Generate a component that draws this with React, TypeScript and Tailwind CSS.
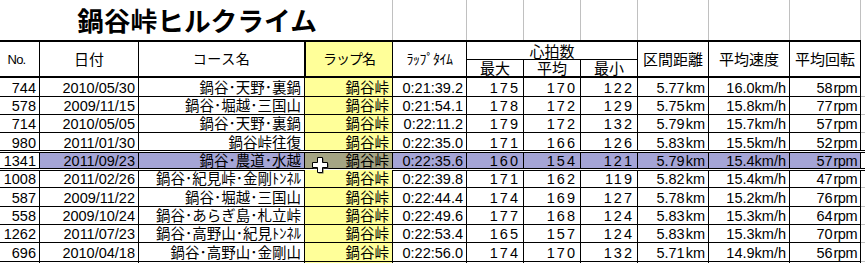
import React from 'react';

const W = ['w-[40px]', 'w-[99px]', 'w-[166px]', 'w-[88px]', 'w-[74px]', 'w-[57px]', 'w-[57px]', 'w-[57px]', 'w-[71px]', 'w-[81px]', 'w-[71px]'];
const H = ['h-[19px]', 'h-[18px]', 'h-[18px]', 'h-[19px]', 'h-[18px]', 'h-[18px]', 'h-[19px]', 'h-[18px]', 'h-[18px]', 'h-[19px]', 'h-[18px]'];

type Row = {
  no: string; date: string; course: string; time: string;
  max: string; avg: string; min: string; dist: string; speed: string; rpm: string; sel?: boolean;
};

const rows: Row[] = [
  { no: '744', date: '2010/05/30', course: '鍋谷･天野･裏鍋', time: '0:21:39.2', max: '175', avg: '170', min: '122', dist: '5.77', speed: '16.0', rpm: '58' },
  { no: '578', date: '2009/11/15', course: '鍋谷･堀越･三国山', time: '0:21:54.1', max: '178', avg: '172', min: '129', dist: '5.75', speed: '15.8', rpm: '77' },
  { no: '714', date: '2010/05/05', course: '鍋谷･天野･裏鍋', time: '0:22:11.2', max: '179', avg: '172', min: '132', dist: '5.79', speed: '15.7', rpm: '57' },
  { no: '980', date: '2011/01/30', course: '鍋谷峠往復', time: '0:22:35.0', max: '171', avg: '166', min: '126', dist: '5.83', speed: '15.5', rpm: '52' },
  { no: '1341', date: '2011/09/23', course: '鍋谷･農道･水越', time: '0:22:35.6', max: '160', avg: '154', min: '121', dist: '5.79', speed: '15.4', rpm: '57', sel: true },
  { no: '1008', date: '2011/02/26', course: '鍋谷･紀見峠･金剛ﾄﾝﾈﾙ', time: '0:22:39.8', max: '171', avg: '162', min: '119', dist: '5.82', speed: '15.4', rpm: '47' },
  { no: '587', date: '2009/11/22', course: '鍋谷･堀越･三国山', time: '0:22:44.4', max: '174', avg: '169', min: '127', dist: '5.78', speed: '15.2', rpm: '76' },
  { no: '558', date: '2009/10/24', course: '鍋谷･あらぎ島･札立峠', time: '0:22:49.6', max: '177', avg: '168', min: '124', dist: '5.83', speed: '15.3', rpm: '64' },
  { no: '1262', date: '2011/07/23', course: '鍋谷･高野山･紀見ﾄﾝﾈﾙ', time: '0:22:53.4', max: '165', avg: '157', min: '124', dist: '5.83', speed: '15.3', rpm: '70' },
  { no: '696', date: '2010/04/18', course: '鍋谷･高野山･金剛山', time: '0:22:56.0', max: '174', avg: '170', min: '132', dist: '5.71', speed: '14.9', rpm: '56' },
  { no: '601', date: '2009/12/06', course: '鍋谷･堀越･三国山', time: '0:22:58.3', max: '176', avg: '168', min: '125', dist: '5.76', speed: '15.0', rpm: '61' },
];

function Cell({ w, className = '', children }: { w: string; className?: string; children?: React.ReactNode }) {
  return (
    <div className={`${w} shrink-0 h-full box-border border-r border-b border-black flex items-center justify-end pr-[3px] pt-[2px] whitespace-nowrap overflow-hidden ${className}`}>
      {children}
    </div>
  );
}

function Cursor() {
  return (
    <svg className="absolute left-[312px] top-[157px] pointer-events-none" width="17" height="17" viewBox="0 0 17 17">
      <polygon points="6.5,1.5 11.5,1.5 11.5,6.5 16.5,6.5 16.5,11.5 11.5,11.5 11.5,16.5 6.5,16.5 6.5,11.5 1.5,11.5 1.5,6.5 6.5,6.5" fill="#555" />
      <polygon points="5.5,0.5 10.5,0.5 10.5,5.5 15.5,5.5 15.5,10.5 10.5,10.5 10.5,15.5 5.5,15.5 5.5,10.5 0.5,10.5 0.5,5.5 5.5,5.5" fill="#fff" stroke="#000" strokeWidth="1" />
    </svg>
  );
}

export default function App() {
  return (
    <div className="relative w-[865px] h-[263px] overflow-hidden bg-white text-black font-['Liberation_Sans','Noto_Sans_CJK_JP',sans-serif]">
      {/* title row */}
      <div className="flex h-[40px]">
        <div className="w-[393px] shrink-0 h-full box-border border-r border-[#c0c0c0] flex justify-center items-start pl-[2px]">
          <span className="font-['Noto_Sans_CJK_JP',sans-serif] font-bold text-[26.7px] leading-normal whitespace-nowrap">鍋谷峠ヒルクライム</span>
        </div>
        <div className="w-[74px] shrink-0 h-full box-border border-r border-[#c0c0c0]" />
        <div className="w-[57px] shrink-0 h-full box-border border-r border-[#c0c0c0]" />
        <div className="w-[57px] shrink-0 h-full box-border border-r border-[#c0c0c0]" />
        <div className="w-[57px] shrink-0 h-full box-border border-r border-[#c0c0c0]" />
        <div className="w-[71px] shrink-0 h-full box-border border-r border-[#c0c0c0]" />
        <div className="w-[81px] shrink-0 h-full box-border border-r border-[#c0c0c0]" />
        <div className="w-[71px] shrink-0 h-full box-border border-r border-[#c0c0c0]" />
      </div>

      {/* header */}
      <div className="flex h-[38px] w-[861px] box-border border-y-2 border-black text-[15px] leading-none">
        <div className="w-[40px] shrink-0 h-full box-border border-r border-black flex items-center justify-center pr-[6px]">
          <span className="text-[13px] tracking-[-0.8px]">No.</span>
        </div>
        <div className="w-[99px] shrink-0 h-full box-border border-r border-black flex items-center justify-center">日付</div>
        <div className="w-[166px] shrink-0 h-full box-border border-r border-black flex items-center justify-center text-[14px] tracking-[0.5px]">コース名</div>
        <div className="w-[88px] shrink-0 h-full box-border border-l border-r border-black bg-[#ffff99] flex items-center justify-center text-[14px] tracking-[-1px]">ラップ名</div>
        <div className="w-[74px] shrink-0 h-full box-border border-r border-black flex items-center justify-center text-[14px] tracking-[-0.5px]">ﾗｯﾌﾟﾀｲﾑ</div>
        <div className="w-[171px] shrink-0 h-full flex flex-col">
          <div className="h-[18px] box-border border-b border-r border-black flex items-center justify-center pt-[1px]">心拍数</div>
          <div className="flex flex-1">
            <div className="w-[57px] shrink-0 h-full box-border border-r border-black flex items-center justify-center pt-[1px]">最大</div>
            <div className="w-[57px] shrink-0 h-full box-border border-r border-black flex items-center justify-center pt-[1px]">平均</div>
            <div className="w-[57px] shrink-0 h-full box-border border-r border-black flex items-center justify-center pt-[1px]">最小</div>
          </div>
        </div>
        <div className="w-[71px] shrink-0 h-full box-border border-r border-black flex items-center justify-center">区間距離</div>
        <div className="w-[81px] shrink-0 h-full box-border border-r border-black flex items-center justify-center">平均速度</div>
        <div className="w-[71px] shrink-0 h-full box-border border-r border-black flex items-center justify-center">平均回転</div>
      </div>

      {/* data rows */}
      <div className="flex flex-col text-[14.5px] leading-none">
        {rows.map((r, i) => {
          const sel = !!r.sel;
          const bg = sel ? 'bg-[#a5a5d6]' : '';
          return (
            <div key={i} className={`relative flex w-[865px] ${H[i]}`}>
              <Cell w={W[0]}>{r.no}</Cell>
              <Cell w={W[1]} className={bg}>{r.date}</Cell>
              <Cell w={W[2]} className={bg}>{r.course}</Cell>
              <Cell w={W[3]} className={sel ? 'bg-[#a5a584]' : 'bg-[#ffff99]'}>鍋谷峠</Cell>
              <Cell w={W[4]} className={bg}>{r.time}</Cell>
              <Cell w={W[5]} className={`${bg} tracking-[2px] pr-[1px]`}>{r.max}</Cell>
              <Cell w={W[6]} className={`${bg} tracking-[2px] pr-[1px]`}>{r.avg}</Cell>
              <Cell w={W[7]} className={`${bg} tracking-[2px] pr-[1px]`}>{r.min}</Cell>
              <Cell w={W[8]} className={bg}>{r.dist}<span className="ml-[1px]">km</span></Cell>
              <Cell w={W[9]} className={bg}>{r.speed}km/h</Cell>
              <Cell w={W[10]} className={bg}>{r.rpm}<span className="ml-[1px] tracking-[-0.5px]">rpm</span></Cell>
              <div className="w-[4px] shrink-0 h-full box-border border-b border-[#c0c0c0]" />
              {sel && (
                <>
                  <div className="absolute left-0 right-0 top-[-2px] h-[3px] box-border border-y border-black bg-white pointer-events-none" />
                  <div className="absolute left-0 right-0 bottom-[-1px] h-[3px] box-border border-y border-black bg-white pointer-events-none" />
                </>
              )}
            </div>
          );
        })}
      </div>

      <Cursor />
    </div>
  );
}
